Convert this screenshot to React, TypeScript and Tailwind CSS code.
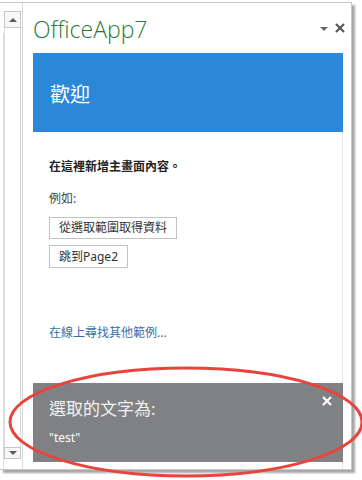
import React from 'react';

const cjk = { fontFamily: '"Noto Sans", "Noto Sans CJK TC", sans-serif' };

export default function App() {
  return (
    <div className="relative w-[362px] h-[480px] bg-white overflow-hidden" style={cjk}>
      {/* window frame */}
      <div className="mt-[2px] w-[352px] h-[468px] flex border-t border-b border-r border-[#c8c8c8] shadow-[3px_3px_2px_rgba(0,0,0,0.35)]">
        {/* grid strip */}
        <div className="w-[4px] border-r border-[#dcdcdc] mt-[30px]" />

        {/* scrollbar */}
        <div className="w-[17px] flex flex-col pt-[8px] pb-[10px]">
          <div className="h-[17px] border border-[#c6c6c6] flex items-center justify-center bg-[#f7f7f7]">
            <div className="w-0 h-0 border-l-[4px] border-r-[4px] border-b-[4px] border-l-transparent border-r-transparent border-b-[#5a5a5a]" />
          </div>
          <div className="flex-1 border-l border-r border-[#dcdcdc]" />
          <div className="h-[12px] border border-[#c6c6c6] flex items-center justify-center bg-[#f7f7f7]">
            <div className="w-0 h-0 border-l-[4px] border-r-[4px] border-t-[4px] border-l-transparent border-r-transparent border-t-[#5a5a5a]" />
          </div>
        </div>

        {/* task pane */}
        <div className="ml-[1px] flex-1 border-l border-[#d6d6d6] flex flex-col pl-[10px] pr-[8px]">
          <div className="h-[50px] flex items-start pt-[11px] relative">
            <span className="text-[23px] leading-[30px] font-light text-[#1f7a3c]" style={{ fontFamily: '"Open Sans", sans-serif' }}>
              OfficeApp7
            </span>
            <div className="absolute right-[15px] top-[24px] w-0 h-0 border-l-[4px] border-r-[4px] border-t-[4px] border-l-transparent border-r-transparent border-t-[#666]" />
            <svg className="absolute right-[-2px] top-[20px]" width="10" height="10" viewBox="0 0 10 10">
              <path d="M1 1L9 9M9 1L1 9" stroke="#555" strokeWidth="2.2" />
            </svg>
          </div>

          <div className="flex-1 flex flex-col border-r border-[#e6e6e6]">
            <div className="h-[79px] bg-[#2b88d8] flex items-center pl-[17px] pt-[4px] mr-[-1px]">
              <span className="text-white text-[20px] leading-none">歡迎</span>
            </div>

            <div className="flex-1 flex flex-col pl-[16px] pt-[26px] text-[12px] text-[#333]">
              <div className="font-bold text-[#222] leading-[18px]">在這裡新增主畫面內容。</div>
              <div className="mt-[14px] leading-[18px] text-[#444]">例如:</div>
              <div className="mt-[9px] flex flex-col items-start gap-[6px]">
                <button className="h-[22px] px-[9px] border border-[#c2c2c2] bg-white text-[12px] leading-none text-[#333]">
                  從選取範圍取得資料
                </button>
                <button className="h-[23px] px-[9px] border border-[#c2c2c2] bg-white text-[12px] leading-none text-[#333]">
                  跳到Page2
                </button>
              </div>
              <div className="mt-[56px] text-[#3a6ea5] leading-[18px]">在線上尋找其他範例...</div>
            </div>

            <div className="h-[79px] bg-[#808184] mr-[-1px] mb-[7px] relative pl-[16px] pt-[14px] text-white">
              <div className="text-[17px] leading-[24px] text-[#f2f2f2]">選取的文字為:</div>
              <div className="mt-[9px] text-[12px] leading-[16px]">"test"</div>
              <svg className="absolute right-[11px] top-[13px]" width="10" height="10" viewBox="0 0 10 10">
                <path d="M1 1L9 9M9 1L1 9" stroke="#fff" strokeWidth="2.2" />
              </svg>
            </div>
          </div>
        </div>
      </div>

      {/* annotation ellipse */}
      <svg className="absolute inset-0 pointer-events-none" width="362" height="480" viewBox="0 0 362 480">
        <ellipse cx="186" cy="422" rx="176" ry="54" fill="none" stroke="#e8443c" strokeWidth="3" />
      </svg>
    </div>
  );
}
